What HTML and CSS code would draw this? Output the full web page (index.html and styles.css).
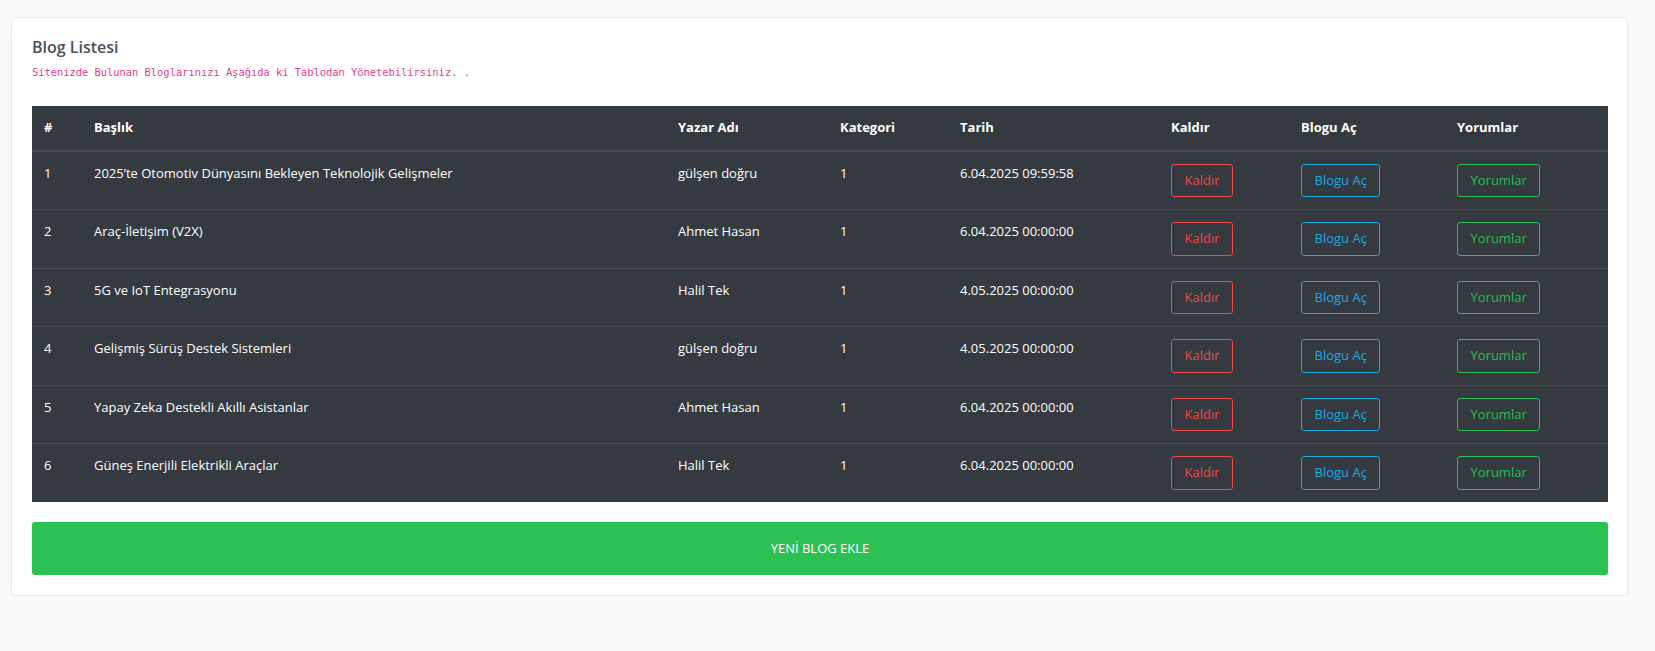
FILE: index.html
```html
<!DOCTYPE html>
<html lang="tr">
<head>
<meta charset="utf-8">
<title>Blog Listesi</title>
<link rel="stylesheet" href="styles.css">
</head>
<body>
<div class="page">
  <div class="card">
    <h4 class="card-title">Blog Listesi</h4>
    <code class="card-sub">Sitenizde Bulunan Bloglarınızı Aşağıda ki Tablodan Yönetebilirsiniz. .</code>
    <table class="blog-table">
      <colgroup>
        <col class="c-num"><col class="c-title"><col class="c-author"><col class="c-cat"><col class="c-date"><col class="c-del"><col class="c-open"><col class="c-com">
      </colgroup>
      <thead>
        <tr><th>#</th><th>Başlık</th><th>Yazar Adı</th><th>Kategori</th><th>Tarih</th><th>Kaldır</th><th>Blogu Aç</th><th>Yorumlar</th></tr>
      </thead>
      <tbody>
        <tr><td>1</td><td>2025’te Otomotiv Dünyasını Bekleyen Teknolojik Gelişmeler</td><td>gülşen doğru</td><td>1</td><td>6.04.2025 09:59:58</td><td><a class="btn btn-red">Kaldır</a></td><td><a class="btn btn-blue">Blogu Aç</a></td><td><a class="btn btn-green">Yorumlar</a></td></tr>
        <tr><td>2</td><td>Araç-İletişim (V2X)</td><td>Ahmet Hasan</td><td>1</td><td>6.04.2025 00:00:00</td><td><a class="btn btn-red">Kaldır</a></td><td><a class="btn btn-blue">Blogu Aç</a></td><td><a class="btn btn-green">Yorumlar</a></td></tr>
        <tr><td>3</td><td>5G ve IoT Entegrasyonu</td><td>Halil Tek</td><td>1</td><td>4.05.2025 00:00:00</td><td><a class="btn btn-red">Kaldır</a></td><td><a class="btn btn-blue">Blogu Aç</a></td><td><a class="btn btn-green">Yorumlar</a></td></tr>
        <tr><td>4</td><td>Gelişmiş Sürüş Destek Sistemleri</td><td>gülşen doğru</td><td>1</td><td>4.05.2025 00:00:00</td><td><a class="btn btn-red">Kaldır</a></td><td><a class="btn btn-blue">Blogu Aç</a></td><td><a class="btn btn-green">Yorumlar</a></td></tr>
        <tr><td>5</td><td>Yapay Zeka Destekli Akıllı Asistanlar</td><td>Ahmet Hasan</td><td>1</td><td>6.04.2025 00:00:00</td><td><a class="btn btn-red">Kaldır</a></td><td><a class="btn btn-blue">Blogu Aç</a></td><td><a class="btn btn-green">Yorumlar</a></td></tr>
        <tr><td>6</td><td>Güneş Enerjili Elektrikli Araçlar</td><td>Halil Tek</td><td>1</td><td>6.04.2025 00:00:00</td><td><a class="btn btn-red">Kaldır</a></td><td><a class="btn btn-blue">Blogu Aç</a></td><td><a class="btn btn-green">Yorumlar</a></td></tr>
      </tbody>
    </table>
    <a class="btn-add">YENİ BLOG EKLE</a>
  </div>
</div>
</body>
</html>
```

FILE: styles.css
```css
* { box-sizing: border-box; }
html, body { margin: 0; padding: 0; }
body {
  background: #fafafa;
  font-family: "Open Sans", "Noto Sans", sans-serif;
  font-size: 13px;
  color: #fff;
}
.page {
  padding: 17px 27px 0 11px;
}
.card {
  background: #fff;
  border: 1px solid #e8eaec;
  border-radius: 4px;
  box-shadow: 0 6px 20px rgba(0,0,0,0.03);
  padding: 19px 19px 20px 20px;
  display: flex;
  flex-direction: column;
}
.card-title {
  margin: 0;
  font-size: 16px;
  line-height: 20px;
  font-weight: 600;
  color: #4b5058;
}
.card-sub {
  margin-top: 8px;
  font-family: "DejaVu Sans Mono", "Liberation Mono", monospace;
  font-size: 10.4px;
  line-height: 15px;
  color: #e83e8c;
}
.blog-table {
  margin-top: 26px;
  width: 100%;
  border-collapse: collapse;
  background: #343a40;
  table-layout: fixed;
}
.c-num { width: 50px; }
.c-title { width: 584px; }
.c-author { width: 162px; }
.c-cat { width: 120px; }
.c-date { width: 211px; }
.c-del { width: 130px; }
.c-open { width: 156px; }
.c-com { width: auto; }
.blog-table th, .blog-table td {
  padding: 12px;
  text-align: left;
  vertical-align: top;
  line-height: 19.5px;
  font-size: 13px;
  color: #fff;
}
.blog-table th {
  font-weight: 700;
  border-bottom: 2px solid #454d55;
}
.blog-table td {
  border-top: 1px solid #454d55;
}
.blog-table thead + tbody tr:first-child td { border-top: 0; }
.btn {
  display: inline-block;
  padding: 6px 12.5px;
  border: 1px solid;
  border-radius: 3px;
  font-size: 13px;
  line-height: 19.5px;
  cursor: pointer;
}
.btn-red { color: #e94b4b; border-color: #e94b4b; }
.btn-blue { color: #1fa8e0; border-color: #1fa8e0; }
.btn-green { color: #2bbd4f; border-color: #2bbd4f; }
.btn-add {
  margin-top: 20px;
  display: flex;
  align-items: center;
  justify-content: center;
  height: 53px;
  background: #2bc253;
  color: #fff;
  border-radius: 3px;
  font-size: 13px;
}
```
